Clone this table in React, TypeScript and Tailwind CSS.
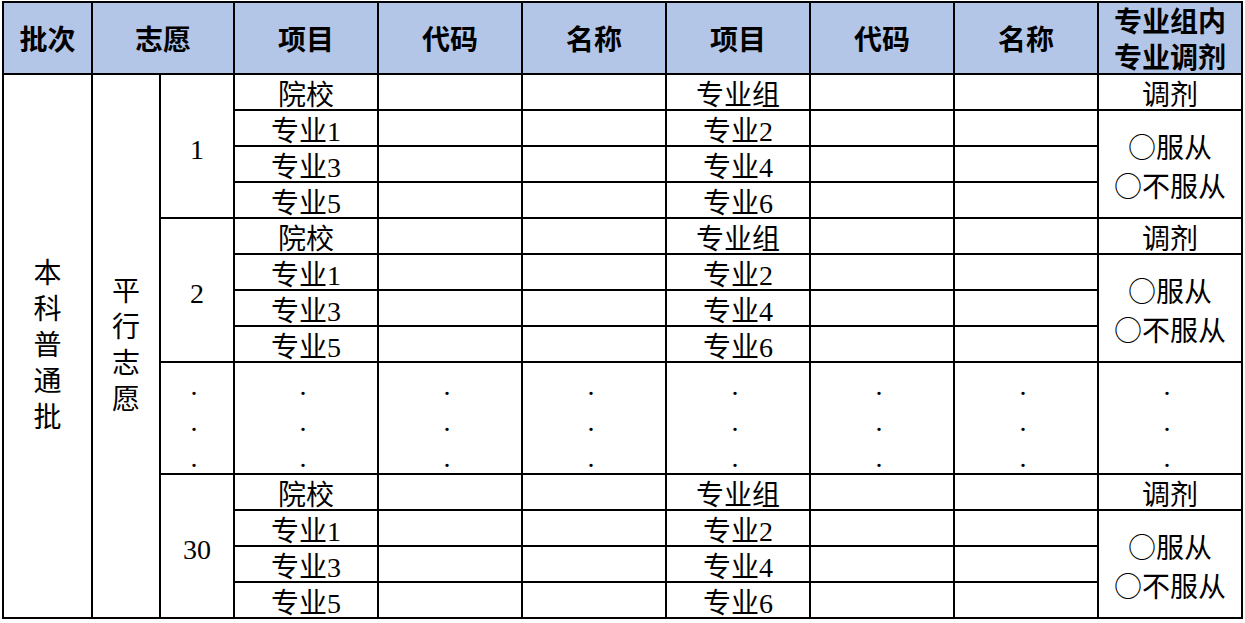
import React from "react";

const font = { fontFamily: '"Liberation Serif", "Noto Sans CJK SC", serif' };

const cell = "flex items-center justify-center bg-white text-[28px] leading-none text-black";
const head = "flex items-center justify-center bg-[#b4c6e7] pt-[6px] text-[28px] font-bold leading-none text-black";

function Circle() {
  return <span className="font-['Noto_Sans_CJK_SC',sans-serif]">○</span>;
}

function VerticalText({ text }: { text: string }) {
  return (
    <div className="flex flex-col items-center">
      {text.split("").map((ch, i) => (
        <span key={i} className="leading-[36px]">
          {ch}
        </span>
      ))}
    </div>
  );
}

const rows = [
  ["院校", "专业组"],
  ["专业1", "专业2"],
  ["专业3", "专业4"],
  ["专业5", "专业6"],
];

function Group({ label }: { label: string }) {
  return (
    <div className="col-span-8 grid grid-cols-[72px_repeat(7,142px)] grid-rows-[repeat(4,34px)] gap-[2px]">
      <div className={`${cell} row-span-4 pt-[8px]`}>{label}</div>
      {rows.map((r, i) => {
        const bg = i === 0 ? "bg-[#e7e6e6]" : "bg-white";
        return (
          <React.Fragment key={i}>
            <div className={`${cell} ${bg} pt-[8px]`}>{r[0]}</div>
            <div className={`${cell} ${bg}`} />
            <div className={`${cell} ${bg}`} />
            <div className={`${cell} ${bg} pt-[8px]`}>{r[1]}</div>
            <div className={`${cell} ${bg}`} />
            <div className={`${cell} ${bg}`} />
            {i === 0 && <div className={`${cell} bg-[#e7e6e6] pt-[8px]`}>调剂</div>}
            {i === 1 && (
              <div className={`${cell} row-span-3 pt-[6px]`}>
                <div className="flex flex-col items-center leading-[36px]">
                  <span>
                    <Circle />
                    服从
                  </span>
                  <span>
                    <Circle />
                    不服从
                  </span>
                </div>
              </div>
            )}
          </React.Fragment>
        );
      })}
    </div>
  );
}

function DotsRow() {
  return (
    <div className="col-span-8 grid h-[110px] grid-cols-[72px_repeat(7,142px)] grid-rows-[110px] gap-[2px]">
      {Array.from({ length: 8 }).map((_, c) => (
        <div key={c} className={`${cell} overflow-hidden`}>
          <div className="flex translate-y-[4px] flex-col items-center">
            {[0, 1, 2].map((i) => (
              <span key={i} className="pr-[6px] leading-[36px]">
                .
              </span>
            ))}
          </div>
        </div>
      ))}
    </div>
  );
}

export default function App() {
  const heads = ["项目", "代码", "名称", "项目", "代码", "名称"];
  return (
    <div className="min-h-screen w-full bg-white pl-[2px] pt-[1px]" style={font}>
      <div className="grid w-fit grid-cols-[87px_66px_72px_repeat(7,142px)] grid-rows-[70px_142px_142px_110px_142px] gap-[2px] bg-black p-[2px]">
        {/* header */}
        <div className={head}>批次</div>
        <div className={`${head} col-span-2`}>志愿</div>
        {heads.map((h, i) => (
          <div key={i} className={head}>
            {h}
          </div>
        ))}
        <div className={head}>
          <div className="flex flex-col items-center leading-[36px]">
            <span>专业组内</span>
            <span>专业调剂</span>
          </div>
        </div>

        {/* merged side columns */}
        <div className={`${cell} row-span-4`}>
          <VerticalText text="本科普通批" />
        </div>
        <div className={`${cell} row-span-4`}>
          <VerticalText text="平行志愿" />
        </div>

        <Group label="1" />
        <Group label="2" />
        <DotsRow />
        <Group label="30" />
      </div>
    </div>
  );
}
